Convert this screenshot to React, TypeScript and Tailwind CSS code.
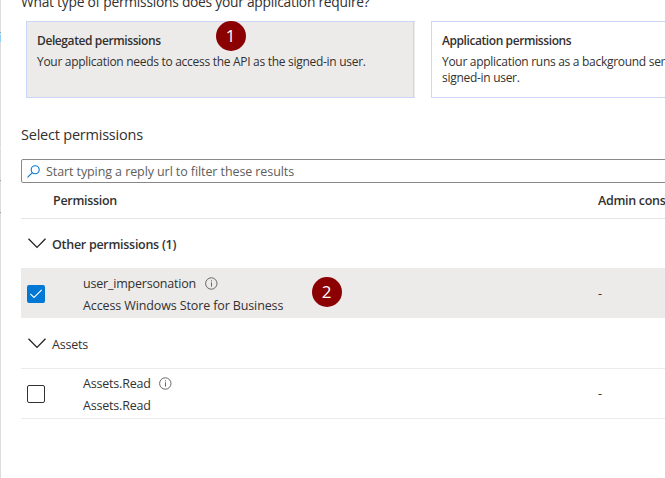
import React from "react";

function Chevron() {
  return (
    <svg className="h-[11px] w-[19px] shrink-0" viewBox="0 0 19 11" fill="none" stroke="#222" strokeWidth="1.3">
      <path d="M0.5 0.8 L9 9.4 L17.5 0.8" />
    </svg>
  );
}

function Info() {
  return (
    <svg className="h-[13px] w-[13px] shrink-0" viewBox="0 0 13 13" fill="none" stroke="#666" strokeWidth="1">
      <circle cx="6.3" cy="6.5" r="5.7" />
      <path d="M6.5 5.4V9.6M6.5 3.3V4.4" />
    </svg>
  );
}

function Badge({ children }: { children: React.ReactNode }) {
  return (
    <span className="flex h-[30px] w-[30px] items-center justify-center rounded-full bg-[#8b0000] font-['Open_Sans',sans-serif] text-[17px] leading-[30px] text-white">
      {children}
    </span>
  );
}

function Group({ label, labelClass }: { label: string; labelClass: string }) {
  return (
    <div className="flex h-[50px] items-center border-b border-[#edebe9] pl-[7px]">
      <div className="-mt-[1px]"><Chevron /></div>
      <span className={"ml-[5px] mt-[3px] whitespace-nowrap leading-4 " + labelClass}>{label}</span>
    </div>
  );
}

export default function App() {
  return (
    <div className="relative flex h-[478px] w-[665px] overflow-hidden bg-white font-['Open_Sans','Noto_Sans',sans-serif] text-[12.5px] text-[#323130]">
      <div className="flex w-px shrink-0 flex-col bg-[#dcdcdc]">
        <div className="mt-[32px] h-px bg-[#69afe5]" />
        <div className="mt-[2px] h-[7px] bg-[#8fd0f5]" />
        <div className="mt-[106px] h-px bg-[#eee]" />
        <div className="mt-[31px] h-px bg-[#999]" />
        <div className="mt-[31px] h-px bg-[#999]" />
      </div>
      <main className="ml-[20px] flex w-[644px] shrink-0 flex-col">
        <h2 className="-mt-[8px] h-5 whitespace-nowrap text-[13.8px] leading-5 tracking-[-0.25px]">
          What type of permissions does your application require?
        </h2>
        <div className="ml-[5px] mt-[9px] flex h-[77px] gap-[16px]">
          <section className="w-[389px] shrink-0 border border-r-0 border-[#cdd6f8] bg-[#edebe9]">
            <div className="h-[75px] w-[387px] border-r border-[#cdd6f8] pl-[10px] pt-[9px] text-[12px]">
              <h3 className="h-[21px] whitespace-nowrap font-semibold leading-5 tracking-[-0.4px]">Delegated permissions</h3>
              <p className="whitespace-nowrap leading-5 tracking-[-0.29px]">Your application needs to access the API as the signed-in user.</p>
            </div>
          </section>
          <section className="w-[389px] shrink-0 border border-[#cdd6f8] pl-[10px] pt-[9px] text-[12px]">
            <h3 className="h-[23px] whitespace-nowrap font-semibold leading-5 tracking-[-0.42px]">Application permissions</h3>
            <p className="whitespace-nowrap leading-4 tracking-[-0.29px]">Your application runs as a background service or daemon without a<br />signed-in user.</p>
          </section>
        </div>
        <h2 className="mt-[27px] h-5 whitespace-nowrap text-[14.5px] leading-5 tracking-[-0.22px]">Select permissions</h2>
        <div className="mt-[14px] flex h-[24px] w-[660px] items-center rounded-[2px] border border-[#8a8886] pl-[5px]">
          <svg className="h-[13px] w-[13px]" viewBox="0 0 13 13" fill="none" stroke="#0078d4" strokeWidth="1.1">
            <circle cx="8.2" cy="4.8" r="4" />
            <path d="M5.4 7.6 L0.5 12.4" />
          </svg>
          <span className="ml-[6px] mt-[2px] whitespace-nowrap leading-5 tracking-[-0.09px] text-[#605e5c]">Start typing a reply url to filter these results</span>
        </div>
        <div className="flex h-[36px] items-center border-b border-[#e5e5e5] pl-[32px] pt-[2px] font-semibold tracking-[-0.3px]">
          <span className="w-[545px] shrink-0">Permission</span>
          <span className="whitespace-nowrap">Admin consent required</span>
        </div>
        <Group label="Other permissions (1)" labelClass="font-semibold tracking-[-0.28px]" />
        <div className="mb-px flex h-[49px] items-center bg-[#edebe9] pl-[6px]">
          <span className="flex h-[18px] w-[18px] shrink-0 items-center justify-center rounded-[2px] bg-[#0078d4]">
            <svg className="h-[10px] w-[14px]" viewBox="0 0 14 10" fill="none" stroke="#fff" strokeWidth="1.1">
              <path d="M1.3 4.8 L5 8.5 L12.7 0.9" />
            </svg>
          </span>
          <div className="ml-[38px] mt-[2px] w-[229px] shrink-0 whitespace-nowrap leading-[22px]">
            <div className="flex items-center"><span className="w-[122px] tracking-[-0.2px]">user_impersonation</span><Info /></div>
            <div className="tracking-[-0.12px]">Access Windows Store for Business</div>
          </div>
          <div className="-mt-[3px] -ml-[0.5px]"><Badge>2</Badge></div>
          <span className="ml-[256.5px] mt-[2px]">-</span>
        </div>
        <Group label="Assets" labelClass="tracking-[-0.2px]" />
        <div className="flex h-[50px] items-center border-b border-[#edebe9] pl-[6px]">
          <span className="h-[18px] w-[18px] shrink-0 rounded-[2px] border border-[#323130]" />
          <div className="ml-[38px] mt-[2px] w-[515px] shrink-0 whitespace-nowrap leading-[22px]">
            <div className="flex items-center"><span className="w-[75.5px] tracking-[-0.2px]">Assets.Read</span><Info /></div>
            <div className="tracking-[-0.2px]">Assets.Read</div>
          </div>
          <span className="mt-[2px]">-</span>
        </div>
      </main>
      <div className="absolute left-[215.5px] top-[20.5px]"><Badge>1</Badge></div>
    </div>
  );
}
